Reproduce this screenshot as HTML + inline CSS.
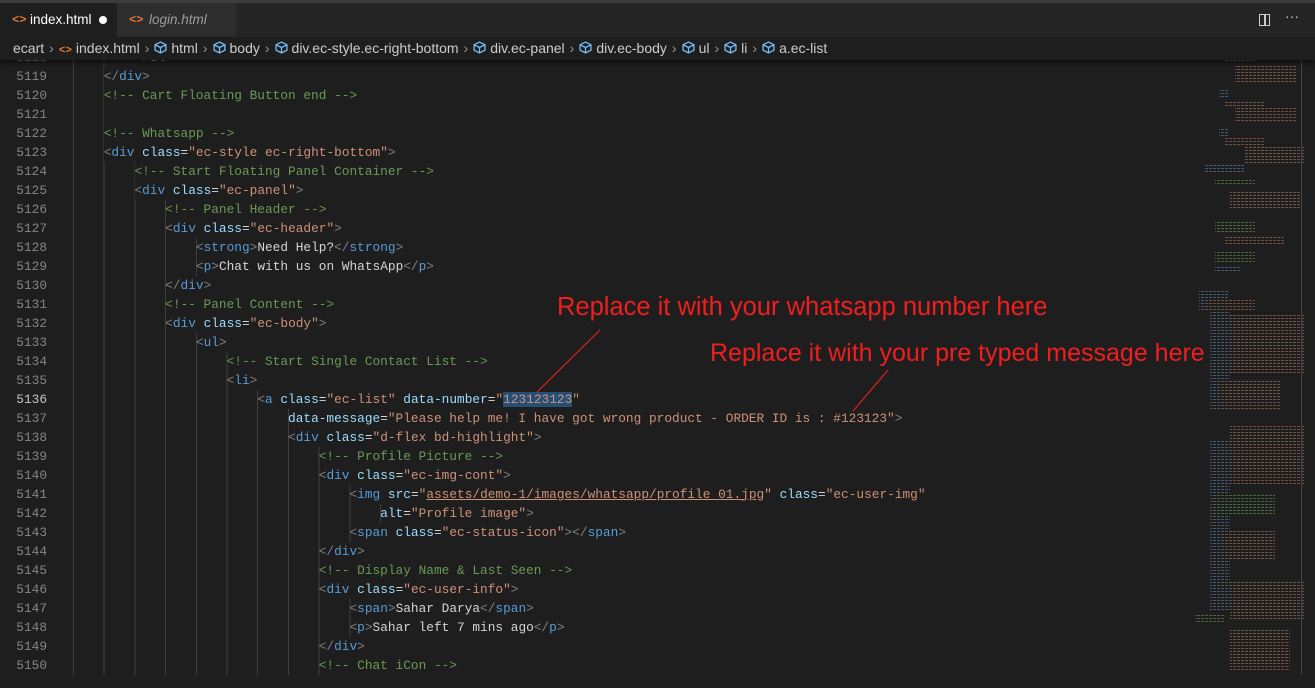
<!DOCTYPE html>
<html><head><meta charset="utf-8"><style>
*{margin:0;padding:0;box-sizing:border-box}
body{width:1315px;height:675px;background:#1e1e1e;overflow:hidden;position:relative;font-family:"Liberation Sans",sans-serif}
.top{position:absolute;left:0;top:0;width:1315px;height:3px;background:#3c3c3c}
.tabs{position:absolute;left:0;top:3px;width:1315px;height:34px;background:#252526}
.tab{position:absolute;top:0;height:34px;font-size:13.5px;line-height:34px;color:#fff}
.tab .ic{color:#e37933;font-family:"Liberation Mono",monospace;font-size:12px;font-weight:bold;position:absolute;left:12px}
.bc{position:absolute;left:0;top:37px;width:1315px;height:23px;background:#1e1e1e;font-size:14px;line-height:23px;color:#cccccc;z-index:5;box-shadow:0 3px 4px rgba(0,0,0,.5);white-space:nowrap;padding-left:13px}
.bc .g{color:#999;margin:0 5px}
.cube{display:inline-block;width:13px;height:13px;vertical-align:-1px;margin-right:4px}
.ed{position:absolute;left:0;top:47.5px;width:1180px;height:640px;font-family:"Liberation Mono",monospace;font-size:12.8px}
.l{position:relative;height:19px;line-height:19px;white-space:pre}
.ln{position:absolute;left:0;width:47px;text-align:right;color:#858585}
.cd{position:absolute;left:73px;color:#d4d4d4}
.gd{position:absolute;left:73px;top:0;height:19px;background:repeating-linear-gradient(to right,#404040 0 1px,transparent 1px 30.7px)}
.t{color:#808080}.n{color:#569cd6}.a{color:#9cdcfe}.s{color:#ce9178}.c{color:#6a9955}
.hl{background:#264f78}
.u{text-decoration:underline;text-decoration-color:#ce9178}
.ann{position:absolute;color:#f01e1e;font-size:25.5px;white-space:nowrap;z-index:6}
</style></head><body>
<div class="top"></div>
<div class="tabs">
 <div class="tab" style="left:0;width:117px;background:#1e1e1e"><span class="ic">&lt;&gt;</span><span style="position:absolute;left:30px">index.html</span><span style="position:absolute;left:99px;top:13px;width:8px;height:8px;border-radius:50%;background:#fff"></span></div>
 <div class="tab" style="left:117px;width:119px;background:#2d2d2d;color:#9d9d9d;font-style:italic"><span class="ic" style="font-style:normal">&lt;&gt;</span><span style="position:absolute;left:32px">login.html</span></div>
 <div style="position:absolute;left:1259px;top:11px;width:11px;height:12px;border:1.5px solid #ccc"></div>
 <div style="position:absolute;left:1264px;top:11px;width:1.5px;height:12px;background:#ccc"></div>
 <div style="position:absolute;left:1285px;top:5px;color:#ccc;font-size:14px">···</div>
</div>
<div class="bc">ecart<span class="g">›</span><span style="color:#e37933;font-family:'Liberation Mono';font-size:11px;font-weight:bold">&lt;&gt;</span> index.html<span class="g">›</span><svg class="cube" viewBox="0 0 12 12"><path d="M6 1L11 3.5V8.5L6 11L1 8.5V3.5Z M1 3.5L6 6L11 3.5 M6 6V11" fill="none" stroke="#75beff" stroke-width="1.2"/></svg>html<span class="g">›</span><svg class="cube" viewBox="0 0 12 12"><path d="M6 1L11 3.5V8.5L6 11L1 8.5V3.5Z M1 3.5L6 6L11 3.5 M6 6V11" fill="none" stroke="#75beff" stroke-width="1.2"/></svg>body<span class="g">›</span><svg class="cube" viewBox="0 0 12 12"><path d="M6 1L11 3.5V8.5L6 11L1 8.5V3.5Z M1 3.5L6 6L11 3.5 M6 6V11" fill="none" stroke="#75beff" stroke-width="1.2"/></svg>div.ec-style.ec-right-bottom<span class="g">›</span><svg class="cube" viewBox="0 0 12 12"><path d="M6 1L11 3.5V8.5L6 11L1 8.5V3.5Z M1 3.5L6 6L11 3.5 M6 6V11" fill="none" stroke="#75beff" stroke-width="1.2"/></svg>div.ec-panel<span class="g">›</span><svg class="cube" viewBox="0 0 12 12"><path d="M6 1L11 3.5V8.5L6 11L1 8.5V3.5Z M1 3.5L6 6L11 3.5 M6 6V11" fill="none" stroke="#75beff" stroke-width="1.2"/></svg>div.ec-body<span class="g">›</span><svg class="cube" viewBox="0 0 12 12"><path d="M6 1L11 3.5V8.5L6 11L1 8.5V3.5Z M1 3.5L6 6L11 3.5 M6 6V11" fill="none" stroke="#75beff" stroke-width="1.2"/></svg>ul<span class="g">›</span><svg class="cube" viewBox="0 0 12 12"><path d="M6 1L11 3.5V8.5L6 11L1 8.5V3.5Z M1 3.5L6 6L11 3.5 M6 6V11" fill="none" stroke="#75beff" stroke-width="1.2"/></svg>li<span class="g">›</span><svg class="cube" viewBox="0 0 12 12"><path d="M6 1L11 3.5V8.5L6 11L1 8.5V3.5Z M1 3.5L6 6L11 3.5 M6 6V11" fill="none" stroke="#75beff" stroke-width="1.2"/></svg>a.ec-list</div>

<div class="ed">
<div class="l"><span class="ln">5118</span><span class="gd" style="width:62px"></span><span class="cd">        <span class="t">&lt;/</span><span class="n">ul</span><span class="t">&gt;</span></span></div>
<div class="l"><span class="ln">5119</span><span class="gd" style="width:31px"></span><span class="cd">    <span class="t">&lt;/</span><span class="n">div</span><span class="t">&gt;</span></span></div>
<div class="l"><span class="ln">5120</span><span class="gd" style="width:31px"></span><span class="cd">    <span class="c">&lt;!-- Cart Floating Button end --&gt;</span></span></div>
<div class="l"><span class="ln">5121</span><span class="gd" style="width:31px"></span></div>
<div class="l"><span class="ln">5122</span><span class="gd" style="width:31px"></span><span class="cd">    <span class="c">&lt;!-- Whatsapp --&gt;</span></span></div>
<div class="l"><span class="ln">5123</span><span class="gd" style="width:31px"></span><span class="cd">    <span class="t">&lt;</span><span class="n">div</span> <span class="a">class</span>=<span class="s">"ec-style ec-right-bottom"</span><span class="t">&gt;</span></span></div>
<div class="l"><span class="ln">5124</span><span class="gd" style="width:62px"></span><span class="cd">        <span class="c">&lt;!-- Start Floating Panel Container --&gt;</span></span></div>
<div class="l"><span class="ln">5125</span><span class="gd" style="width:62px"></span><span class="cd">        <span class="t">&lt;</span><span class="n">div</span> <span class="a">class</span>=<span class="s">"ec-panel"</span><span class="t">&gt;</span></span></div>
<div class="l"><span class="ln">5126</span><span class="gd" style="width:93px"></span><span class="cd">            <span class="c">&lt;!-- Panel Header --&gt;</span></span></div>
<div class="l"><span class="ln">5127</span><span class="gd" style="width:93px"></span><span class="cd">            <span class="t">&lt;</span><span class="n">div</span> <span class="a">class</span>=<span class="s">"ec-header"</span><span class="t">&gt;</span></span></div>
<div class="l"><span class="ln">5128</span><span class="gd" style="width:124px"></span><span class="cd">                <span class="t">&lt;</span><span class="n">strong</span><span class="t">&gt;</span>Need Help?<span class="t">&lt;/</span><span class="n">strong</span><span class="t">&gt;</span></span></div>
<div class="l"><span class="ln">5129</span><span class="gd" style="width:124px"></span><span class="cd">                <span class="t">&lt;</span><span class="n">p</span><span class="t">&gt;</span>Chat with us on WhatsApp<span class="t">&lt;/</span><span class="n">p</span><span class="t">&gt;</span></span></div>
<div class="l"><span class="ln">5130</span><span class="gd" style="width:93px"></span><span class="cd">            <span class="t">&lt;/</span><span class="n">div</span><span class="t">&gt;</span></span></div>
<div class="l"><span class="ln">5131</span><span class="gd" style="width:93px"></span><span class="cd">            <span class="c">&lt;!-- Panel Content --&gt;</span></span></div>
<div class="l"><span class="ln">5132</span><span class="gd" style="width:93px"></span><span class="cd">            <span class="t">&lt;</span><span class="n">div</span> <span class="a">class</span>=<span class="s">"ec-body"</span><span class="t">&gt;</span></span></div>
<div class="l"><span class="ln">5133</span><span class="gd" style="width:124px"></span><span class="cd">                <span class="t">&lt;</span><span class="n">ul</span><span class="t">&gt;</span></span></div>
<div class="l"><span class="ln">5134</span><span class="gd" style="width:155px"></span><span class="cd">                    <span class="c">&lt;!-- Start Single Contact List --&gt;</span></span></div>
<div class="l"><span class="ln">5135</span><span class="gd" style="width:155px"></span><span class="cd">                    <span class="t">&lt;</span><span class="n">li</span><span class="t">&gt;</span></span></div>
<div class="l"><span class="ln" style="color:#c6c6c6">5136</span><span class="gd" style="width:186px"></span><span class="cd">                        <span class="t">&lt;</span><span class="n">a</span> <span class="a">class</span>=<span class="s">"ec-list"</span> <span class="a">data-number</span>=<span class="s">"<span class="hl">123123123</span>"</span></span></div>
<div class="l"><span class="ln">5137</span><span class="gd" style="width:217px"></span><span class="cd">                            <span class="a">data-message</span>=<span class="s">"Please help me! I have got wrong product - ORDER ID is : #123123"</span><span class="t">&gt;</span></span></div>
<div class="l"><span class="ln">5138</span><span class="gd" style="width:217px"></span><span class="cd">                            <span class="t">&lt;</span><span class="n">div</span> <span class="a">class</span>=<span class="s">"d-flex bd-highlight"</span><span class="t">&gt;</span></span></div>
<div class="l"><span class="ln">5139</span><span class="gd" style="width:248px"></span><span class="cd">                                <span class="c">&lt;!-- Profile Picture --&gt;</span></span></div>
<div class="l"><span class="ln">5140</span><span class="gd" style="width:248px"></span><span class="cd">                                <span class="t">&lt;</span><span class="n">div</span> <span class="a">class</span>=<span class="s">"ec-img-cont"</span><span class="t">&gt;</span></span></div>
<div class="l"><span class="ln">5141</span><span class="gd" style="width:279px"></span><span class="cd">                                    <span class="t">&lt;</span><span class="n">img</span> <span class="a">src</span>=<span class="s">"<span class="u">assets/demo-1/images/whatsapp/profile_01.jpg</span>"</span> <span class="a">class</span>=<span class="s">"ec-user-img"</span></span></div>
<div class="l"><span class="ln">5142</span><span class="gd" style="width:310px"></span><span class="cd">                                        <span class="a">alt</span>=<span class="s">"Profile image"</span><span class="t">&gt;</span></span></div>
<div class="l"><span class="ln">5143</span><span class="gd" style="width:279px"></span><span class="cd">                                    <span class="t">&lt;</span><span class="n">span</span> <span class="a">class</span>=<span class="s">"ec-status-icon"</span><span class="t">&gt;&lt;/</span><span class="n">span</span><span class="t">&gt;</span></span></div>
<div class="l"><span class="ln">5144</span><span class="gd" style="width:248px"></span><span class="cd">                                <span class="t">&lt;/</span><span class="n">div</span><span class="t">&gt;</span></span></div>
<div class="l"><span class="ln">5145</span><span class="gd" style="width:248px"></span><span class="cd">                                <span class="c">&lt;!-- Display Name &amp; Last Seen --&gt;</span></span></div>
<div class="l"><span class="ln">5146</span><span class="gd" style="width:248px"></span><span class="cd">                                <span class="t">&lt;</span><span class="n">div</span> <span class="a">class</span>=<span class="s">"ec-user-info"</span><span class="t">&gt;</span></span></div>
<div class="l"><span class="ln">5147</span><span class="gd" style="width:279px"></span><span class="cd">                                    <span class="t">&lt;</span><span class="n">span</span><span class="t">&gt;</span>Sahar Darya<span class="t">&lt;/</span><span class="n">span</span><span class="t">&gt;</span></span></div>
<div class="l"><span class="ln">5148</span><span class="gd" style="width:279px"></span><span class="cd">                                    <span class="t">&lt;</span><span class="n">p</span><span class="t">&gt;</span>Sahar left 7 mins ago<span class="t">&lt;/</span><span class="n">p</span><span class="t">&gt;</span></span></div>
<div class="l"><span class="ln">5149</span><span class="gd" style="width:248px"></span><span class="cd">                                <span class="t">&lt;/</span><span class="n">div</span><span class="t">&gt;</span></span></div>
<div class="l"><span class="ln">5150</span><span class="gd" style="width:248px"></span><span class="cd">                                <span class="c">&lt;!-- Chat iCon --&gt;</span></span></div>
</div>

<div class="ann" style="left:557px;top:293px">Replace it with your whatsapp number here</div>
<div class="ann" style="left:710px;top:339px;font-size:25px">Replace it with your pre typed message here</div>
<svg style="position:absolute;left:0;top:0;z-index:6" width="1315" height="675"><line x1="600" y1="330" x2="537" y2="392" stroke="#e02020" stroke-width="1.2"/><line x1="888" y1="370" x2="853" y2="411" stroke="#e02020" stroke-width="1.2"/></svg>

<svg style="position:absolute;left:1185px;top:60px" width="130" height="615">
<defs><pattern id="p" width="4" height="3" patternUnits="userSpaceOnUse"><rect width="3" height="1" fill="#fff"/></pattern>
<mask id="m"><rect width="130" height="615" fill="url(#p)"/></mask></defs>
<g mask="url(#m)" opacity=".75">
<g fill="#4f6f86">
<rect x="40" y="0" width="30" height="3"/><rect x="34" y="30" width="10" height="8"/><rect x="34" y="68" width="10" height="8"/><rect x="20" y="104" width="40" height="10"/><rect x="30" y="205" width="25" height="6"/><rect x="14" y="230" width="30" height="20"/><rect x="25" y="250" width="20" height="100"/><rect x="25" y="380" width="20" height="170"/>
</g>
<g fill="#8a6350">
<rect x="50" y="4" width="62" height="20"/><rect x="40" y="40" width="40" height="6"/><rect x="50" y="48" width="62" height="14"/><rect x="40" y="78" width="40" height="8"/><rect x="60" y="86" width="60" height="18"/><rect x="45" y="130" width="70" height="18"/><rect x="40" y="175" width="60" height="10"/><rect x="20" y="240" width="50" height="12"/><rect x="45" y="255" width="75" height="60"/><rect x="35" y="320" width="60" height="30"/><rect x="45" y="365" width="75" height="60"/><rect x="40" y="470" width="50" height="30"/><rect x="45" y="520" width="75" height="40"/><rect x="45" y="570" width="60" height="40"/>
</g>
<g fill="#5b7d44">
<rect x="30" y="120" width="40" height="6"/><rect x="30" y="160" width="40" height="12"/><rect x="30" y="192" width="40" height="12"/><rect x="30" y="435" width="60" height="20"/><rect x="10" y="555" width="30" height="8"/>
</g>
</g>
<rect x="116" y="0" width="1" height="615" fill="#444"/>
</svg>
</body></html>
